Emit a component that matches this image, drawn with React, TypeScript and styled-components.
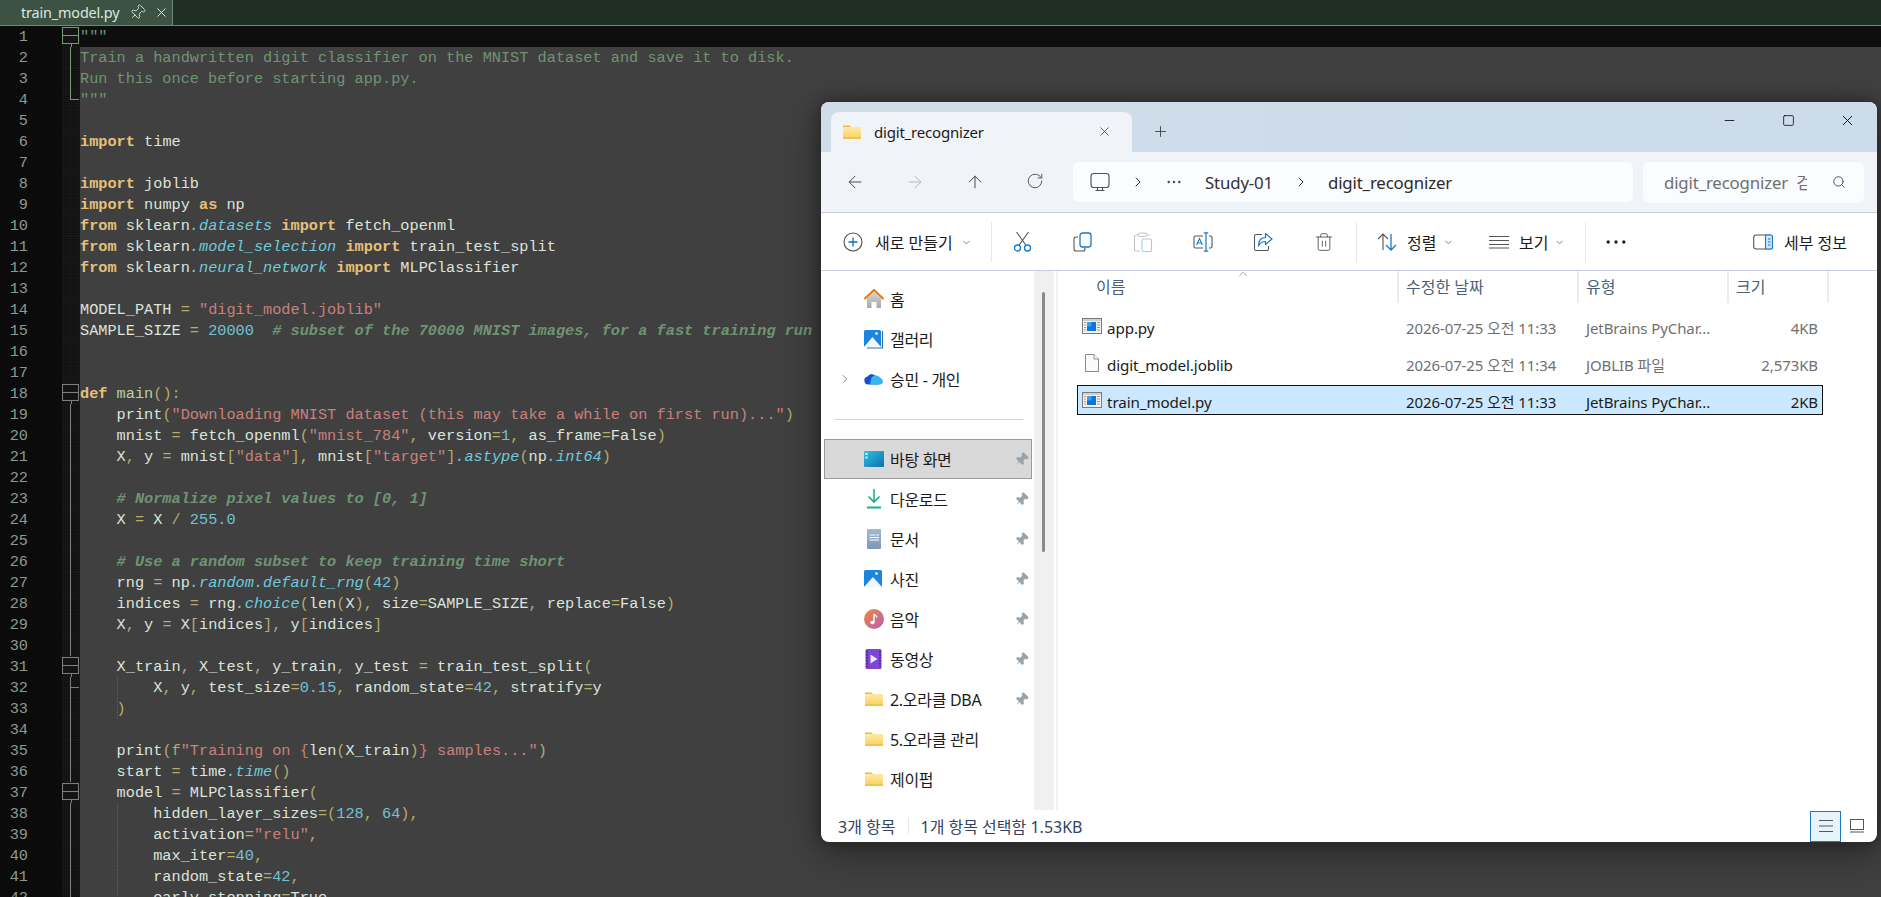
import React from "react";
import styled, { createGlobalStyle } from "styled-components";
import {
  ArrowLeft, ArrowRight, ArrowUp, RotateCw, ChevronRight, ChevronDown, ChevronUp,
  Minus, Square, X, Plus, Search, Trash2, Pin,
} from "lucide-react";

const Global = createGlobalStyle`
  html, body { margin: 0; padding: 0; background: #404040; overflow: hidden; }
  #root { width: 1881px; height: 897px; position: relative; overflow: hidden; }
`;

const UI = `"Noto Sans", "Noto Sans CJK KR", sans-serif`;
const MONO = `"Liberation Mono", monospace`;

/* ---------- editor ---------- */
const Page = styled.div`
  width: 1881px; height: 897px; display: flex; flex-direction: column; overflow: hidden; background: #404040;
`;
const TabStrip = styled.div`
  height: 25px; flex: none; display: flex; background: #1f2f24; border-bottom: 1px solid #71877a;
`;
const EditorTab = styled.div`
  width: 173px; height: 25px; display: flex; align-items: center; padding-left: 21px; box-sizing: border-box;
  background: #3c5343; border-right: 1px solid #71877a; color: #dfe6e1;
  font: 14.4px ${UI}; letter-spacing: -0.15px;
`;
const TabName = styled.span` width: 108px; `;
const TabClose = styled.span` display: flex; margin-left: 8px; color: #e6e6e6; `;
const Lines = styled.div` flex: 1; overflow: hidden; `;
const Row = styled.div<{ $current?: boolean }>`
  height: 21px; display: grid; grid-template-columns: 62px 18px 1fr; grid-template-rows: 21px;
  background: ${p => (p.$current ? "#0e0e0e" : "#404040")};
`;
const LineNo = styled.div`
  background: #0b0b0b; color: #8b9a90; text-align: right; padding-right: 34px; box-sizing: border-box;
  font: 15.25px/23px ${MONO};
`;
const Fold = styled.div<{ $green?: boolean }>`
  position: relative; background-color: #171717;
  background-image: linear-gradient(45deg, #0c0c0c 25%, transparent 25%, transparent 75%, #0c0c0c 75%);
  background-size: 2px 2px;
  color: ${p => (p.$green ? "#6f9a78" : "#7d7d7d")};
`;
const FoldLine = styled.i<{ $end?: boolean; $tick?: boolean }>`
  position: absolute; left: 8px; top: 0; width: 1px; height: ${p => (p.$end ? "11px" : "21px")}; background: currentColor;
  &::after {
    content: ""; display: ${p => (p.$end || p.$tick ? "block" : "none")}; position: absolute; left: 0; top: 10px;
    width: 9px; height: 1px; background: currentColor;
  }
`;
const FoldBox = styled.i`
  position: absolute; left: 0; top: 1px; width: 15px; height: 15px; border: 1px solid currentColor;
  &::before { content: ""; position: absolute; left: 0; right: 0; top: 7px; height: 1px; background: currentColor; }
  &::after { content: ""; position: absolute; left: 7.5px; top: 16px; width: 1px; height: 4px; background: currentColor; }
`;
const Code = styled.pre<{ $guide?: boolean }>`
  position: relative; margin: 0; color: #dce4dc; white-space: pre;
  font: 15.25px/23px ${MONO};
  &::before {
    content: ""; display: ${p => (p.$guide ? "block" : "none")}; position: absolute; left: 37px; top: 0; height: 21px;
    border-left: 1px dotted #5e5e5e;
  }
`;
const Tok = styled.span<{ $k: string }>`
  ${p => ({
    kw: "color:#e6c07a;font-weight:700;",
    str: "color:#c9807d;",
    num: "color:#72c3d6;",
    com: "color:#6f9474;font-weight:700;font-style:italic;",
    doc: "color:#6f9474;",
    attr: "color:#6fcbdc;font-style:italic;",
    op: "color:#b5ab6c;",
    fn: "color:#b9d39f;",
    txt: "",
  } as Record<string, string>)[p.$k]}
`;

/* ---------- explorer window ---------- */
const Win = styled.div`
  position: absolute; left: 821px; top: 102px; width: 1056px; height: 740px; display: flex; flex-direction: column;
  border-radius: 8px; overflow: hidden; background: #fff; font-family: ${UI}; color: #1b1b1b;
  box-shadow: 0 0 0 1px #2e2e2e, 0 0 14px rgba(0,0,0,.35), 0 10px 40px rgba(0,0,0,.4);
`;
const TitleBar = styled.div`
  height: 50px; flex: none; display: flex; align-items: flex-end; padding-left: 10px; background: linear-gradient(90deg,#d0dcea,#ccdcea);
`;
const WinTab = styled.div`
  width: 301px; height: 40px; box-sizing: border-box; display: flex; align-items: center; padding: 0 20px 1px 12px;
  background: #f0f4f9; border-radius: 8px 8px 0 0; font-size: 15px; letter-spacing: -0.2px;
`;
const TabText = styled.span` flex: 1; margin-left: 13px; `;
const NewTab = styled.div` width: 56px; height: 40px; padding-bottom: 1px; box-sizing: border-box; display: flex; align-items: center; justify-content: center; color: #444; `;
const WinControls = styled.div` margin-left: auto; align-self: flex-start; display: flex; padding-top: 4px; color: #111; `;
const WinBtn = styled.div` width: 59px; height: 28px; display: flex; align-items: center; justify-content: center; `;
const AddressRow = styled.div`
  height: 61px; flex: none; box-sizing: border-box; display: flex; align-items: center; background: #f0f4f9; border-bottom: 1px solid #c6d1dc;
`;
const NavIcons = styled.div` width: 252px; display: flex; padding-left: 4px; box-sizing: border-box; `;
const NavBtn = styled.div<{ $off?: boolean }>`
  width: 60px; display: flex; justify-content: center; color: ${p => (p.$off ? "#b5b9bd" : "#4a4a4a")};
`;
const AddressBox = styled.div`
  width: 560px; height: 40px; background: #fafcfe; border-radius: 6px; display: flex; align-items: center;
  font-size: 16.8px; color: #2a2a2a; letter-spacing: -0.15px;
`;
const Crumb = styled.span<{ $w: number }>` width: ${p => p.$w}px; display: flex; justify-content: center; flex: none; color: #333; `;
const CrumbLast = styled.span` margin-left: 5px; `;
const SearchBox = styled.div`
  width: 221px; height: 41px; margin-left: 10px; background: #fafcfe; border-radius: 6px; display: flex; align-items: center; justify-content: space-between;
  padding: 0 18px 0 21px; box-sizing: border-box; color: #6f6f6f; font-size: 16.8px; letter-spacing: -0.15px;
`;
const SearchText = styled.span` width: 143px; overflow: hidden; white-space: nowrap; word-spacing: 4px; `;
const CommandBar = styled.div`
  height: 58px; flex: none; box-sizing: border-box; display: flex; align-items: center; background: #fff; border-bottom: 1px solid #c6d1dc; padding: 1px 0 0 22px; font-size: 16px;
`;
const CmdLabel = styled.span<{ $ml: number; $w?: number }>` margin-left: ${p => p.$ml}px; ${p => p.$w ? `width:${p.$w}px;` : ""} white-space: nowrap; `;
const CmdSep = styled.div<{ $ml: number }>` width: 1px; height: 40px; background: #e8e8e8; margin-left: ${p => p.$ml}px; `;
const CmdIcon = styled.div<{ $ml: number }>` margin-left: ${p => p.$ml}px; display: flex; `;
const Chev = styled.span<{ $ml: number }>` margin-left: ${p => p.$ml}px; display: flex; color: #777; `;
const Body = styled.div` flex: 1; display: flex; min-height: 0; `;
const Nav = styled.div` width: 213px; flex: none; padding-top: 8px; font-size: 16px; letter-spacing: -0.3px; overflow: hidden; `;
const NavRow = styled.div<{ $sel?: boolean }>`
  width: 208px; height: 40px; margin-left: 3px; box-sizing: border-box; display: flex; align-items: center;
  ${p => (p.$sel ? "background:#d9d9d9; border:1px solid #9a9a9a;" : "border:1px solid transparent;")}
`;
const NavChev = styled.div` width: 39px; flex: none; display: flex; justify-content: center; color: #7a7a7a; `;
const NavIco = styled.div` width: 20px; height: 20px; flex: none; display: flex; align-items: center; justify-content: center; `;
const NavText = styled.span` flex: 1; margin-left: 6px; white-space: nowrap; `;
const PinIco = styled.div` width: 16px; flex: none; display: flex; color: #9aa3a9; margin-right: 1px; `;
const NavDivider = styled.div` height: 1px; background: #d2d2d2; margin: 20px 11px 19px 13px; `;
const Track = styled.div` width: 20px; flex: none; background: #f0f0f0; padding: 21px 9px 0 8px; box-sizing: border-box; `;
const Thumb = styled.div` height: 260px; border-radius: 2px; background: #8b8b8b; `;
const Main = styled.div` flex: 1; margin-left: 2px; border-left: 2px solid #f2f2f2; `;
const Header = styled.div`
  height: 32px; display: grid; grid-template-columns: 341px 180px 150px 100px; position: relative; color: #4b5f78; font-size: 16px; line-height: 32px;
`;
const HeadCell = styled.div<{ $pl: number }>` padding-left: ${p => p.$pl}px; border-right: 2px solid #ececec; box-sizing: border-box; `;
const SortMark = styled.span` position: absolute; left: 178px; top: -4px; color: #777; display: flex; `;
const Files = styled.div` padding: 8px 0 0 19px; display: flex; flex-direction: column; gap: 7px; font-size: 15.2px; `;
const FileRow = styled.div<{ $sel?: boolean }>`
  width: 746px; height: 30px; box-sizing: border-box; display: grid; grid-template-columns: 320px 180px 150px 94px; align-items: center;
  border: 1px solid ${p => (p.$sel ? "#111" : "transparent")}; background: ${p => (p.$sel ? "#cce8ff" : "transparent")};
  color: ${p => (p.$sel ? "#1b1b1b" : "#707070")};
`;
const FileName = styled.div` display: flex; align-items: center; gap: 5px; padding-left: 4px; color: #1b1b1b; letter-spacing: -0.1px; line-height: 24px; `;
const FileLabel = styled.span` padding-top: 3px; `;
const FileCell = styled.div<{ $right?: boolean }>`
  padding: 3px 4px 0 8px; box-sizing: border-box; white-space: nowrap; font-size: 15px; letter-spacing: -0.1px;
  ${p => (p.$right ? "text-align:right;" : "")}
`;
const Status = styled.div`
  height: 32px; flex: none; display: flex; align-items: center; padding-left: 17px; font-size: 16px; color: #34435f; position: relative;
`;
const StatusSep = styled.div` width: 1px; height: 16px; background: #e8e8e8; margin: 0 11px 0 13px; `;
const ViewBtn = styled.div<{ $on?: boolean }>`
  width: 31px; height: 31px; box-sizing: border-box; display: flex; align-items: center; justify-content: center;
  ${p => (p.$on ? "background:#e5f3fb; border:1px solid #1d79c2;" : "")}
`;
const ViewGroup = styled.div` margin-left: auto; margin-right: 5px; display: flex; gap: 0; `;

/* ---------- drawn icons ---------- */
const FolderIco = ({ w = 18 }: { w?: number }) => (
  <svg width={w} height={w} viewBox="0 0 18 18">
    <defs><linearGradient id="fg" x1="0" y1="0" x2="0" y2="1"><stop offset="0" stopColor="#ffe9a6" /><stop offset="1" stopColor="#fbd25f" /></linearGradient></defs>
    <path d="M0 2.500h6.500l2 2H0z" fill="#f5b731" />
    <rect x="0" y="4" width="18" height="11.500" rx=".6" fill="url(#fg)" />
    <rect x="0" y="14.600" width="18" height="1" fill="#e8ab2e" />
  </svg>
);
const PyIco = () => (
  <svg width="20" height="20" viewBox="0 0 20 20">
    <rect x=".5" y="2.500" width="19" height="15" fill="#f2f2f2" stroke="#7b7b7b" />
    <rect x="1" y="3" width="18" height="2" fill="#cfcfcf" />
    <rect x="5" y="6" width="9" height="9" fill="#0a77d6" />
    <rect x="5" y="6" width="4.500" height="4.500" fill="#3aa0ee" />
    <path d="M2 6.500h2M2 9h2M2 11.500h2M2 14h2M15 6.500h3M15 9h3M15 11.500h3M15 14h3" stroke="#9a9a9a" />
  </svg>
);
const BlankFile = () => (
  <svg width="20" height="20" viewBox="0 0 20 20">
    <path d="M3.500 1.500h8.500l4.500 4.500v12.500h-13z" fill="#fafafa" stroke="#8a8a8a" />
    <path d="M12 1.500v4.500h4.500" fill="#fff" stroke="#8a8a8a" />
  </svg>
);
const HomeIco = () => (
  <svg width="20" height="20" viewBox="0 0 20 20">
    <defs><linearGradient id="hg" x1="0" y1="0" x2="0" y2="1"><stop offset="0" stopColor="#d4d4d4" /><stop offset="1" stopColor="#a9a9a9" /></linearGradient></defs>
    <path d="M3 9.500 10 3l7 6.500V19h-4.500v-6h-5v6H3z" fill="url(#hg)" />
    <path d="M.5 10 10 1l9.500 9" fill="none" stroke="#e3780f" strokeWidth="2" />
  </svg>
);
const PictureIco = ({ stack }: { stack?: boolean }) => (
  <svg width="20" height="20" viewBox="0 0 20 20">
    {stack && <path d="M18.500 2v17H3" fill="none" stroke="#2a6fb5" strokeWidth="1.200" />}
    <rect x="0" y="1" width={stack ? 17 : 18} height="17" rx="1.500" fill="#1a86dd" />
    <path d={stack ? "M0 18 8.500 8 17 18z" : "M0 18 9 8l9 10z"} fill="#f2f7fb" />
    <circle cx="12.500" cy="4.500" r="1.300" fill="#fff" />
  </svg>
);
const CloudIco = () => (
  <svg width="20" height="20" viewBox="0 0 20 20">
    <path d="M4 15.500a4 4 0 0 1-.5-7.900A5 5 0 0 1 8 5l4 2 3 8.500z" fill="#1453c8" />
    <path d="M7 10a5.500 5.500 0 0 1 9.800-.8A3.300 3.300 0 0 1 16.500 15.500H6z" fill="#35b4f4" />
  </svg>
);
const DesktopIco = () => (
  <svg width="20" height="20" viewBox="0 0 20 20">
    <defs><linearGradient id="dg" x1="0" y1="0" x2="1" y2="1"><stop offset="0" stopColor="#2cc3e0" /><stop offset="1" stopColor="#0f6fb0" /></linearGradient></defs>
    <rect x="0" y="2" width="20" height="16" rx="1" fill="url(#dg)" />
    <rect x="1.500" y="4" width="2" height="2" fill="#fff" />
    <rect x="1.500" y="7.500" width="2" height="2" fill="#d5f2fa" />
  </svg>
);
const DownloadIco = () => (
  <svg width="20" height="20" viewBox="0 0 20 20" fill="none" stroke="#1fae8c" strokeWidth="1.600">
    <path d="M10 0v13M4.500 7.500 10 13l5.500-5.500" />
    <path d="M3 18.500h14" strokeWidth="2" />
  </svg>
);
const DocIco = () => (
  <svg width="20" height="20" viewBox="0 0 20 20">
    <defs><linearGradient id="dc" x1="0" y1="0" x2="0" y2="1"><stop offset="0" stopColor="#a2b8d0" /><stop offset="1" stopColor="#7c97b8" /></linearGradient></defs>
    <rect x="3" y="0" width="14" height="20" rx="1" fill="url(#dc)" />
    <path d="M5.500 6h6M12.500 6h2.500M5.500 8.500h9.500M5.500 11h9.500" stroke="#fff" />
  </svg>
);
const MusicIco = () => (
  <svg width="20" height="20" viewBox="0 0 20 20">
    <defs><linearGradient id="mg" x1="0" y1="0" x2="1" y2="1"><stop offset="0" stopColor="#ef8a3c" /><stop offset="1" stopColor="#b45fb4" /></linearGradient></defs>
    <circle cx="10" cy="10" r="10" fill="url(#mg)" />
    <path d="M10 5v8.200" stroke="#fff" strokeWidth="1.400" />
    <ellipse cx="8.400" cy="13.500" rx="2.200" ry="1.800" fill="#fff" />
    <path d="M10 5c1 1.600 2.600 1.600 3 3.400" fill="none" stroke="#fff" strokeWidth="1.300" />
  </svg>
);
const VideoIco = () => (
  <svg width="20" height="20" viewBox="0 0 20 20">
    <rect x="1.500" y="0" width="16" height="20" rx="1.500" fill="#7f45d6" />
    <path d="M6.500 5.500v9l7-4.500z" fill="#eee6fb" />
    <path d="M3 2v16M16 2v16" stroke="#3b1d7a" strokeWidth="1.500" strokeDasharray="1.500 1.500" />
  </svg>
);
const Monitor = () => (
  <svg width="20" height="20" viewBox="0 0 20 20" fill="none" stroke="#555" strokeWidth="1.200">
    <rect x="1" y="1.500" width="18" height="14" rx="2.500" />
    <path d="M7.500 15.500v3M12.500 15.500v3M5.500 18.500h9" />
  </svg>
);
const PlusCircle = () => (
  <svg width="20" height="20" viewBox="0 0 20 20" fill="none">
    <circle cx="10" cy="10" r="9" stroke="#4a4a4a" strokeWidth="1.100" />
    <path d="M10 5.500v9M5.500 10h9" stroke="#0f6cbd" strokeWidth="1.300" />
  </svg>
);
const Cut = () => (
  <svg width="20" height="20" viewBox="0 0 20 20" fill="none">
    <path d="M3.500 0 12.800 13M15.500 0 6.200 13" stroke="#555" strokeWidth="1.100" />
    <circle cx="4.500" cy="16" r="3" stroke="#1479c9" strokeWidth="1.300" />
    <circle cx="14.500" cy="16" r="3" stroke="#1479c9" strokeWidth="1.300" />
  </svg>
);
const CopyI = () => (
  <svg width="20" height="20" viewBox="0 0 20 20" fill="none">
    <path d="M5 5H3a2 2 0 0 0-2 2v10a2 2 0 0 0 2 2h7a2 2 0 0 0 2-2v-1" stroke="#555" strokeWidth="1.100" />
    <rect x="7" y="1" width="11" height="14" rx="2.500" stroke="#1479c9" strokeWidth="1.300" />
  </svg>
);
const PasteI = () => (
  <svg width="20" height="20" viewBox="0 0 20 20" fill="none">
    <path d="M6 3H3a1.500 1.500 0 0 0-1.500 1.500v13A1.500 1.500 0 0 0 3 19h4M14 3h2.500" stroke="#c4c4c4" strokeWidth="1.100" />
    <rect x="5.500" y="1" width="8" height="3.500" rx="1" stroke="#c4c4c4" />
    <rect x="9" y="7" width="9.500" height="12.500" rx="1.500" stroke="#a5c9e8" strokeWidth="1.100" />
  </svg>
);
const RenameI = () => (
  <svg width="20" height="20" viewBox="0 0 20 20" fill="none">
    <path d="M10 4H2.500A1.500 1.500 0 0 0 1 5.500v9A1.500 1.500 0 0 0 2.500 16H10M16 4h1.500A1.500 1.500 0 0 1 19 5.500v9a1.500 1.500 0 0 1-1.500 1.500H16" stroke="#555" strokeWidth="1.100" />
    <path d="M13 .8v18.400M10.800.8h4.400M10.800 19.200h4.400" stroke="#1479c9" strokeWidth="1.200" />
    <path d="M3.600 13 6.500 6.500 9.400 13M4.600 11h3.800" stroke="#1479c9" strokeWidth="1.100" />
  </svg>
);
const ShareI = () => (
  <svg width="20" height="20" viewBox="0 0 20 20" fill="none">
    <path d="M9 2.500H3A1.500 1.500 0 0 0 1.500 4v13A1.500 1.500 0 0 0 3 18.500h11a1.500 1.500 0 0 0 1.500-1.500v-3" stroke="#555" strokeWidth="1.100" />
    <path d="M12.500 1.500 19 7l-6.500 5.500V9.500C9 9.500 7 11 5.500 14c0-5.500 2.500-8.500 7-8.500z" stroke="#1479c9" strokeWidth="1.200" strokeLinejoin="round" />
  </svg>
);
const SortI = () => (
  <svg width="20" height="20" viewBox="0 0 20 20" fill="none">
    <path d="M6 18V2M1 7l5-5 5 5" stroke="#555" strokeWidth="1.100" />
    <path d="M14 2v16M9 13l5 5 5-5" stroke="#1479c9" strokeWidth="1.300" />
  </svg>
);
const ListI = ({ c = "#555" }: { c?: string }) => (
  <svg width="20" height="20" viewBox="0 0 20 20" fill="none" stroke={c} strokeWidth="1.100">
    <path d="M0 4.500h20M0 8.500h20M0 12.500h20M0 16h20" />
  </svg>
);
const DetailsI = () => (
  <svg width="20" height="20" viewBox="0 0 20 20" fill="none">
    <rect x=".7" y="3" width="18.600" height="14" rx="2.500" stroke="#555" strokeWidth="1.100" />
    <path d="M12.500 3h5a2 2 0 0 1 2 2v10a2 2 0 0 1-2 2h-5z" fill="#cfe6f8" stroke="#1479c9" strokeWidth="1.100" />
    <path d="M15 7h2.500M15 10h2.500M15 13h2.500" stroke="#1479c9" />
  </svg>
);
const Dots = ({ r = 1.700, c = "#222", w = 20 }: { r?: number; c?: string; w?: number }) => (
  <svg width={w} height="6" viewBox={`0 0 ${w} 6`} fill={c}>
    <circle cx={r + 0.5} cy="3" r={r} /><circle cx={w / 2} cy="3" r={r} /><circle cx={w - r - 0.5} cy="3" r={r} />
  </svg>
);
const ThreeLines = () => (
  <svg width="14" height="14" viewBox="0 0 14 14" fill="none" stroke="#555" strokeWidth="1">
    <path d="M0 1.500h14M0 7h14M0 12.500h14" />
  </svg>
);
const PreviewI = () => (
  <svg width="14" height="14" viewBox="0 0 14 14" fill="none" stroke="#555" strokeWidth="1">
    <rect x=".5" y=".5" width="13" height="10" /><path d="M0 13h14" />
  </svg>
);

/* ---------- data ---------- */
const SOURCE = `"""
Train a handwritten digit classifier on the MNIST dataset and save it to disk.
Run this once before starting app.py.
"""

import time

import joblib
import numpy as np
from sklearn.datasets import fetch_openml
from sklearn.model_selection import train_test_split
from sklearn.neural_network import MLPClassifier

MODEL_PATH = "digit_model.joblib"
SAMPLE_SIZE = 20000  # subset of the 70000 MNIST images, for a fast training run


def main():
    print("Downloading MNIST dataset (this may take a while on first run)...")
    mnist = fetch_openml("mnist_784", version=1, as_frame=False)
    X, y = mnist["data"], mnist["target"].astype(np.int64)

    # Normalize pixel values to [0, 1]
    X = X / 255.0

    # Use a random subset to keep training time short
    rng = np.random.default_rng(42)
    indices = rng.choice(len(X), size=SAMPLE_SIZE, replace=False)
    X, y = X[indices], y[indices]

    X_train, X_test, y_train, y_test = train_test_split(
        X, y, test_size=0.15, random_state=42, stratify=y
    )

    print(f"Training on {len(X_train)} samples...")
    start = time.time()
    model = MLPClassifier(
        hidden_layer_sizes=(128, 64),
        activation="relu",
        max_iter=40,
        random_state=42,
        early_stopping=True,`.split("\n");

const TOKEN = /(#.*)|("[^"]*")|\b(import|from|as|def)\b|(\.[A-Za-z_]\w*)|\b(\d+(?:\.\d+)?)\b|([=\/(),\[\]:])/g;

function tokenize(line: string, n: number): React.ReactNode {
  if (n <= 4) return <Tok $k="doc">{line}</Tok>;
  if (n === 35) {
    return (
      <>
        {"    print"}<Tok $k="op">(f</Tok><Tok $k="str">"Training on {"{"}</Tok>len<Tok $k="op">(</Tok>X_train<Tok $k="op">)</Tok>
        <Tok $k="str">{"}"} samples..."</Tok><Tok $k="op">)</Tok>
      </>
    );
  }
  const out: React.ReactNode[] = [];
  let last = 0;
  let m: RegExpExecArray | null;
  TOKEN.lastIndex = 0;
  while ((m = TOKEN.exec(line))) {
    if (m.index > last) {
      const plain = line.slice(last, m.index);
      out.push(plain === " main" ? <Tok key={last} $k="fn">{plain}</Tok> : plain);
    }
    const k = m[1] ? "com" : m[2] ? "str" : m[3] ? "kw" : m[4] ? "attr" : m[5] ? "num" : "op";
    out.push(<Tok key={m.index} $k={k}>{m[0]}</Tok>);
    last = m.index + m[0].length;
  }
  if (last < line.length) out.push(line.slice(last));
  return out;
}

const foldFor = (n: number): React.ReactNode => {
  if (n === 1 || n === 18 || n === 31 || n === 37) return <FoldBox />;
  if (n === 2 || n === 3) return <FoldLine />;
  if (n === 4) return <FoldLine $end />;
  if (n === 32) return <FoldLine $tick />;
  if (n > 18) return <FoldLine />;
  return null;
};

const NAV: [string, React.ReactNode, boolean?, boolean?][] = [
  ["바탕 화면", <DesktopIco />, true, true],
  ["다운로드", <DownloadIco />, true],
  ["문서", <DocIco />, true],
  ["사진", <PictureIco />, true],
  ["음악", <MusicIco />, true],
  ["동영상", <VideoIco />, true],
  ["2.오라클 DBA", <FolderIco />, true],
  ["5.오라클 관리", <FolderIco />],
  ["제이펍", <FolderIco />],
];

const FILES = [
  { name: "app.py", icon: <PyIco />, date: "2026-07-25 오전 11:33", type: "JetBrains PyChar...", size: "4KB" },
  { name: "digit_model.joblib", icon: <BlankFile />, date: "2026-07-25 오전 11:34", type: "JOBLIB 파일", size: "2,573KB" },
  { name: "train_model.py", icon: <PyIco />, date: "2026-07-25 오전 11:33", type: "JetBrains PyChar...", size: "2KB", sel: true },
];

export default function App() {
  return (
    <>
      <Global />
      <Page>
        <TabStrip>
          <EditorTab>
            <TabName>train_model.py</TabName>
            <Pin size={17} strokeWidth={1.2} style={{ transform: "rotate(45deg)" }} color="#dfe6e1" />
            <TabClose><X size={15} strokeWidth={1.5} /></TabClose>
          </EditorTab>
        </TabStrip>
        <Lines>
          {SOURCE.map((line, i) => {
            const n = i + 1;
            return (
              <Row key={n} $current={n === 1}>
                <LineNo>{n}</LineNo>
                <Fold $green={n <= 4}>{foldFor(n)}</Fold>
                <Code $guide={n === 32 || n === 33 || n >= 38}>{tokenize(line, n)}</Code>
              </Row>
            );
          })}
        </Lines>
      </Page>

      <Win>
        <TitleBar>
          <WinTab>
            <FolderIco />
            <TabText>digit_recognizer</TabText>
            <X size={15} strokeWidth={1.2} color="#333" />
          </WinTab>
          <NewTab><Plus size={17} strokeWidth={1.3} /></NewTab>
          <WinControls>
            <WinBtn><Minus size={15} strokeWidth={1.4} /></WinBtn>
            <WinBtn><Square size={13} strokeWidth={1.5} /></WinBtn>
            <WinBtn><X size={17} strokeWidth={1.4} /></WinBtn>
          </WinControls>
        </TitleBar>
        <AddressRow>
          <NavIcons>
            <NavBtn><ArrowLeft size={20} strokeWidth={1.2} /></NavBtn>
            <NavBtn $off><ArrowRight size={20} strokeWidth={1.2} /></NavBtn>
            <NavBtn><ArrowUp size={20} strokeWidth={1.2} /></NavBtn>
            <NavBtn><RotateCw size={18} strokeWidth={1.2} /></NavBtn>
          </NavIcons>
          <AddressBox>
            <Crumb $w={54}><Monitor /></Crumb>
            <Crumb $w={22}><ChevronRight size={16} strokeWidth={1.5} /></Crumb>
            <Crumb $w={50}><Dots r={1.2} c="#444" w={14} /></Crumb>
            <Crumb $w={80}>Study-01</Crumb>
            <Crumb $w={44}><ChevronRight size={16} strokeWidth={1.5} /></Crumb>
            <CrumbLast>digit_recognizer</CrumbLast>
          </AddressBox>
          <SearchBox>
            <SearchText>digit_recognizer 검색</SearchText>
            <Search size={14} strokeWidth={1.5} color="#444" />
          </SearchBox>
        </AddressRow>
        <CommandBar>
          <PlusCircle />
          <CmdLabel $ml={12} $w={83}>새로 만들기</CmdLabel>
          <Chev $ml={3}><ChevronDown size={11} /></Chev>
          <CmdSep $ml={19} />
          <CmdIcon $ml={21}><Cut /></CmdIcon>
          <CmdIcon $ml={40}><CopyI /></CmdIcon>
          <CmdIcon $ml={40}><PasteI /></CmdIcon>
          <CmdIcon $ml={40}><RenameI /></CmdIcon>
          <CmdIcon $ml={40}><ShareI /></CmdIcon>
          <CmdIcon $ml={41}><Trash2 size={20} strokeWidth={1.1} color="#555" /></CmdIcon>
          <CmdSep $ml={22} />
          <CmdIcon $ml={20}><SortI /></CmdIcon>
          <CmdLabel $ml={10} $w={30}>정렬</CmdLabel>
          <Chev $ml={6}><ChevronDown size={11} /></Chev>
          <CmdIcon $ml={35}><ListI /></CmdIcon>
          <CmdLabel $ml={10} $w={30}>보기</CmdLabel>
          <Chev $ml={5}><ChevronDown size={11} /></Chev>
          <CmdSep $ml={20} />
          <CmdIcon $ml={20}><Dots /></CmdIcon>
          <CmdIcon $ml={127}><DetailsI /></CmdIcon>
          <CmdLabel $ml={11}>세부 정보</CmdLabel>
        </CommandBar>
        <Body>
          <Nav>
            <NavRow><NavChev /><NavIco><HomeIco /></NavIco><NavText>홈</NavText></NavRow>
            <NavRow><NavChev /><NavIco><PictureIco stack /></NavIco><NavText>갤러리</NavText></NavRow>
            <NavRow><NavChev><ChevronRight size={14} strokeWidth={1.5} /></NavChev><NavIco><CloudIco /></NavIco><NavText>승민 - 개인</NavText></NavRow>
            <NavDivider />
            {NAV.map(([label, icon, pinned, sel]) => (
              <NavRow key={label} $sel={sel}>
                <NavChev />
                <NavIco>{icon}</NavIco>
                <NavText>{label}</NavText>
                {pinned && <PinIco><Pin size={15} fill="currentColor" strokeWidth={1.2} style={{ transform: "rotate(45deg)" }} /></PinIco>}
              </NavRow>
            ))}
          </Nav>
          <Track><Thumb /></Track>
          <Main>
            <Header>
              <SortMark><ChevronUp size={14} strokeWidth={1.1} /></SortMark>
              <HeadCell $pl={38}>이름</HeadCell>
              <HeadCell $pl={7}>수정한 날짜</HeadCell>
              <HeadCell $pl={7}>유형</HeadCell>
              <HeadCell $pl={7}>크기</HeadCell>
            </Header>
            <Files>
              {FILES.map(f => (
                <FileRow key={f.name} $sel={f.sel}>
                  <FileName>{f.icon}<FileLabel>{f.name}</FileLabel></FileName>
                  <FileCell>{f.date}</FileCell>
                  <FileCell>{f.type}</FileCell>
                  <FileCell $right>{f.size}</FileCell>
                </FileRow>
              ))}
            </Files>
          </Main>
        </Body>
        <Status>
          3개 항목
          <StatusSep />
          1개 항목 선택함 1.53KB
          <ViewGroup>
            <ViewBtn $on><ThreeLines /></ViewBtn>
            <ViewBtn><PreviewI /></ViewBtn>
          </ViewGroup>
        </Status>
      </Win>
    </>
  );
}
